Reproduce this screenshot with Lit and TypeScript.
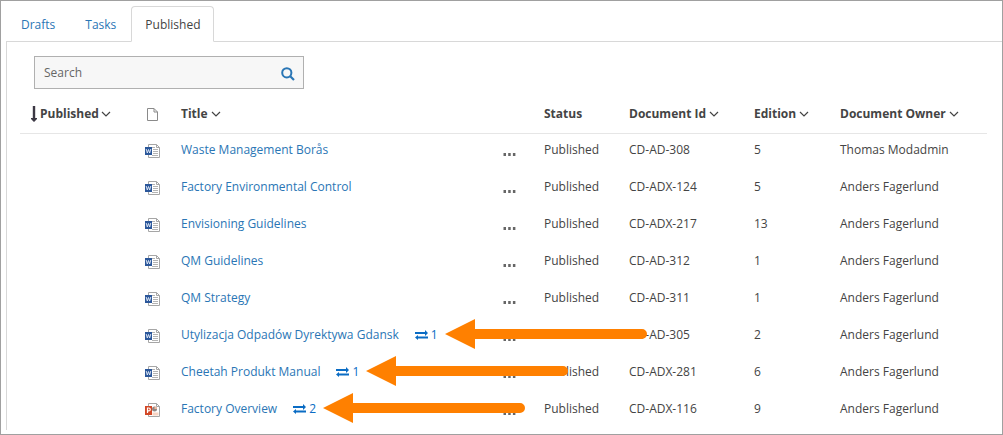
import { LitElement, html, svg, css, nothing } from "lit";
import { customElement, property, state } from "lit/decorators.js";
import { classMap } from "lit/directives/class-map.js";

type FileKind = "word" | "powerpoint";

interface Doc {
  title: string;
  kind: FileKind;
  id: string;
  edition: number;
  owner: string;
  related?: number;
}

const DOCS: Doc[] = [
  { title: "Waste Management Borås", kind: "word", id: "CD-AD-308", edition: 5, owner: "Thomas Modadmin" },
  { title: "Factory Environmental Control", kind: "word", id: "CD-ADX-124", edition: 5, owner: "Anders Fagerlund" },
  { title: "Envisioning Guidelines", kind: "word", id: "CD-ADX-217", edition: 13, owner: "Anders Fagerlund" },
  { title: "QM Guidelines", kind: "word", id: "CD-AD-312", edition: 1, owner: "Anders Fagerlund" },
  { title: "QM Strategy", kind: "word", id: "CD-AD-311", edition: 1, owner: "Anders Fagerlund" },
  { title: "Utylizacja Odpadów Dyrektywa Gdansk", kind: "word", id: "CD-AD-305", edition: 2, owner: "Anders Fagerlund", related: 1 },
  { title: "Cheetah Produkt Manual", kind: "word", id: "CD-ADX-281", edition: 6, owner: "Anders Fagerlund", related: 1 },
  { title: "Factory Overview", kind: "powerpoint", id: "CD-ADX-116", edition: 9, owner: "Anders Fagerlund", related: 2 },
];

@customElement("file-icon")
export class FileIcon extends LitElement {
  @property() kind: FileKind = "word";

  static styles = css`
    :host { display: block; }
    svg { display: block; }
  `;

  render() {
    const word = this.kind === "word";
    return html`<svg width="16" height="16" viewBox="0 0 16 16" aria-hidden="true">
      <path d="M3.500 1.500h8l3 3v10h-11z" fill="#fff" stroke="#a6a6a6" />
      <path d="M11.500 1.500v3h3" fill="none" stroke="#a6a6a6" />
      ${word
        ? svg`<path d="M7 4.500h3M8 6.500h5M8 8.500h5M8 10.500h5M7 12.500h6" stroke="#b4b4b4" />
            <path d="M0 4h7v8h-7z" fill="#2b579a" />
            <path d="M1.200 6l1.100 4 1.200-3.500 1.200 3.500 1.100-4" fill="none" stroke="#e4ecf8" stroke-width="0.900" />`
        : svg`<circle cx="9.500" cy="7" r="2.500" fill="#8e8684" />
            <path d="M9.500 7v-2.500a2.500 2.500 0 0 1 2.500 2.500z" fill="#f2b79c" />
            <path d="M7.500 10.500h6v3h-6z" fill="#f7d3c2" />
            <path d="M0 4h7v9h-7z" fill="#d24726" />
            <path d="M2.500 11v-5h1.300a1.400 1.400 0 0 1 0 2.900h-1.300" fill="none" stroke="#fff" stroke-width="1.200" />`}
    </svg>`;
  }
}

@customElement("callout-arrow")
export class CalloutArrow extends LitElement {
  static styles = css`
    :host { display: block; pointer-events: none; }
    svg { display: block; }
  `;

  render() {
    return html`<svg width="202" height="30" viewBox="0 0 202 30" aria-hidden="true">
      <path d="M0 15L30 0v10h167a5 5 0 0 1 0 10h-167v10z" fill="#ff8000" />
    </svg>`;
  }
}

@customElement("app-root")
export class AppRoot extends LitElement {
  @state() private tab = "Published";

  static styles = css`
    :host {
      display: block;
      box-sizing: border-box;
      min-height: 100vh;
      padding: 5px 0 0 5px;
      border: 1px solid #a0a0a0;
      overflow: hidden;
      background: #fff;
      color: #444;
      font: 12px/18px "Open Sans", sans-serif;
    }
    * { box-sizing: border-box; }
    a { color: #2a76b5; text-decoration: none; }
    button {
      padding: 0;
      border: 0;
      background: none;
      color: inherit;
      font: inherit;
      cursor: pointer;
    }
    .tabs { display: flex; }
    .tab {
      padding: 9px 14px 7px;
      border: 1px solid transparent;
      border-radius: 4px 4px 0 0;
      margin-bottom: -1px;
    }
    .tab.active {
      position: relative;
      padding: 9px 13px 7px;
      border-color: #d8d8d8;
      border-bottom-color: #fff;
      background: #fff;
      color: #444;
    }
    .panel {
      border: 1px solid #d8d8d8;
      border-width: 1px 0 0 1px;
      padding: 14px 15px 0 13px;
    }
    .search {
      display: flex;
      align-items: center;
      width: 270px;
      height: 33px;
      margin-left: 14px;
      padding: 0 8px 0 9px;
      border: 1px solid #b0b0b0;
      background: #f7f7f7;
    }
    .search input {
      flex: 1;
      min-width: 0;
      padding: 0;
      border: 0;
      outline: 0;
      background: none;
      color: #444;
      font: inherit;
    }
    .search input::placeholder { color: #666; opacity: 1; }
    .search button { display: flex; padding-top: 3px; color: #2a76b5; }
    table {
      width: 100%;
      margin-top: 6px;
      border-collapse: separate;
      border-spacing: 0;
      table-layout: fixed;
    }
    th, td { padding: 0; text-align: left; white-space: nowrap; vertical-align: top; }
    th { height: 39px; padding-top: 10px; border-bottom: 1px solid #e6e6e6; font-weight: 700; }
    td { height: 37px; padding-top: 7px; }
    .c-published { width: 125px; }
    .c-type { width: 36px; }
    .c-menu { width: 41px; }
    .c-status { width: 85px; }
    .c-id { width: 125px; }
    .c-edition { width: 86px; }
    .c-owner { width: 147px; }
    .sort { display: flex; align-items: center; gap: 3px; }
    .sorted { padding-left: 10px; gap: 2px; }
    svg { display: block; }
    .type { padding-top: 9px; }
    .doc-head { padding: 13px 0 0 2px; }
    .title { display: flex; gap: 16px; }
    .related { position: relative; display: flex; align-items: center; gap: 3px; color: #0a6cc4; }
    .related callout-arrow { position: absolute; left: calc(100% + 7px); top: -7px; z-index: 1; }
    .menu { display: flex; align-items: flex-end; height: 18px; padding-bottom: 3px; color: #666; }
  `;

  private chevron() {
    return html`<svg class="chevron" width="10" height="8" viewBox="0 0 10 8" aria-hidden="true">
      <path d="M1 2l4 4 4-4" fill="none" stroke="#444" stroke-width="1.200" />
    </svg>`;
  }

  private sortHead(label: string) {
    return html`<button class="sort">${label}${this.chevron()}</button>`;
  }

  private row(doc: Doc) {
    return html`<tr>
      <td></td>
      <td class="type"><file-icon kind=${doc.kind}></file-icon></td>
      <td>
        <div class="title">
          <a href="#">${doc.title}</a>
          ${doc.related
            ? html`<a class="related" href="#" aria-label="${doc.related} related">
                <svg width="13" height="10" viewBox="0 0 13 10" aria-hidden="true">
                  <path d="M0 2h10v-2l3 3-3 3v-2h-10zM13 8.500h-10v1.500l-3-2.500 3-2.500v1.500h10z" fill="currentColor" />
                </svg>
                <span>${doc.related}</span>
                <callout-arrow></callout-arrow>
              </a>`
            : nothing}
        </div>
      </td>
      <td>
        <button class="menu" aria-label="Open menu">
          <svg width="13" height="3" viewBox="0 0 13 3" aria-hidden="true">
            <path d="M0.500 0h2.500v3h-2.500zM5.200 0h2.500v3h-2.500zM9.900 0h2.500v3h-2.500z" fill="currentColor" />
          </svg>
        </button>
      </td>
      <td>Published</td>
      <td>${doc.id}</td>
      <td>${doc.edition}</td>
      <td>${doc.owner}</td>
    </tr>`;
  }

  render() {
    return html`
      <nav class="tabs">
        ${["Drafts", "Tasks", "Published"].map(
          (t) => html`<a
            href="#"
            class=${classMap({ tab: true, active: t === this.tab })}
            @click=${(e: Event) => { e.preventDefault(); this.tab = t; }}
          >${t}</a>`
        )}
      </nav>
      <main class="panel">
        <form class="search" @submit=${(e: Event) => e.preventDefault()}>
          <input type="text" placeholder="Search" aria-label="Search" />
          <button aria-label="Run search">
            <svg width="14" height="14" viewBox="0 0 14 14" aria-hidden="true">
              <circle cx="5.800" cy="5.800" r="4.600" fill="none" stroke="currentColor" stroke-width="2" />
              <path d="M9.200 9.200l3.800 3.800" stroke="currentColor" stroke-width="2.200" />
            </svg>
          </button>
        </form>
        <table>
          <thead>
            <tr>
              <th class="c-published" aria-sort="descending">
                <button class="sort sorted">
                  <svg width="8" height="16" viewBox="0 0 8 16" aria-hidden="true">
                    <path d="M2.800 0h2.400v12h1.800v1l-3 3-3-3v-1h1.800z" fill="#3c3844" />
                  </svg>
                  Published${this.chevron()}
                </button>
              </th>
              <th class="c-type doc-head">
                <svg width="11" height="13" viewBox="0 0 11 13" role="img" aria-label="Type">
                  <path d="M0.500 0.500h6.500l3.500 3.500v8.500h-10zM7 0.500v3.500h3.500" fill="#fff" stroke="#8a8a8a" />
                </svg>
              </th>
              <th>${this.sortHead("Title")}</th>
              <th class="c-menu"></th>
              <th class="c-status">Status</th>
              <th class="c-id">${this.sortHead("Document Id")}</th>
              <th class="c-edition">${this.sortHead("Edition")}</th>
              <th class="c-owner">${this.sortHead("Document Owner")}</th>
            </tr>
          </thead>
          <tbody>${DOCS.map((d) => this.row(d))}</tbody>
        </table>
      </main>
    `;
  }
}
